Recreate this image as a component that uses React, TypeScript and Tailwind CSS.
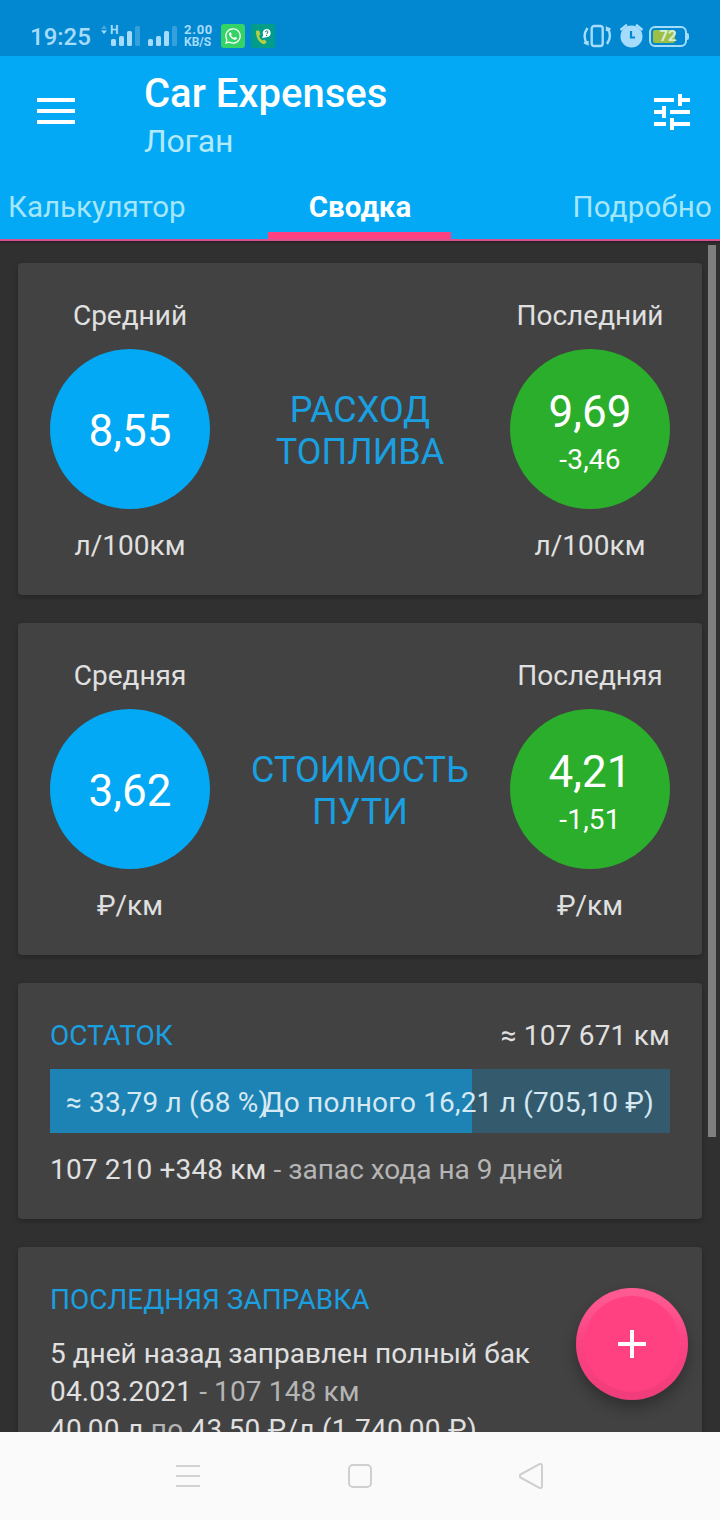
import { MdTune } from "react-icons/md";
import { FaWhatsapp } from "react-icons/fa";

type Reading = {
  label: string;
  value: string;
  diff?: string;
  unit: string;
};

function SignalBars({ className }: { className: string }) {
  return (
    <svg className={className} width="30" height="20" viewBox="0 0 30 20" fill="#a6dcfb">
      <rect x="0" y="13" width="5" height="7" rx="1.5" />
      <rect x="8" y="10" width="5" height="10" rx="1.5" />
      <rect x="16" y="5" width="5" height="15" rx="1.5" />
      <rect x="24" y="0" width="5" height="20" rx="1.5" opacity="0.3" />
    </svg>
  );
}

/* ================= STATUS BAR ================= */
function StatusBar() {
  return (
    <div className="flex h-14 items-start bg-[#0288d1] pr-[31px] pl-[30px] text-[#a6dcfb]">
      <span className="mt-[22px] w-[71px] text-2xl leading-[30px] font-medium">19:25</span>

      {/* first SIM with data arrows and network type */}
      <div className="relative mt-[26px] ml-[10px] w-[37px]">
        <SignalBars className="block" />
        <svg className="absolute -top-px -left-[10px]" width="6" height="10" viewBox="0 0 6 10">
          <path d="M0 4L3 0L6 4Z" fill="#a6dcfb" opacity="0.4" />
          <path d="M0 5.5L3 9L6 5.5Z" fill="#a6dcfb" />
        </svg>
        <span className="absolute -top-[2px] -left-[1px] text-[12px] leading-[12px] font-bold">H</span>
      </div>
      <SignalBars className="mt-[26px] block" />

      <div className="mt-[24px] ml-[6px] w-[31px] text-[13px] leading-[12px] font-bold">
        <div className="tracking-[0.7px]">2.00</div>
        <div className="text-[12px]">KB/S</div>
      </div>

      <div className="mt-6 ml-[6px] flex size-6 items-center justify-center rounded-[3px] bg-[#35d366]">
        <FaWhatsapp className="size-[18px] text-white" />
      </div>
      <svg className="mt-6 ml-[6px] block" width="24" height="24" viewBox="0 0 24 24">
        <rect width="24" height="24" rx="2" fill="#009e8a" />
        <path
          d="M5 7.5C5 6.5 8 6 8.5 7L9.3 10.5L8 12C8.8 14 10 15.5 11.5 16.5L13.2 15.6L15.6 17.5C15.5 19.5 13.5 20.5 11.5 19.7C7.5 18 5 13 5 7.5Z"
          fill="#b5cf45"
        />
        <path d="M15.5 5A4 4 0 1 1 15.5 13.2L11 14L12.2 11A4 4 0 0 1 15.5 5Z" fill="#fff" />
        <path d="M14.3 8.2C14.3 6.5 17 6.5 17 8C17 9.2 15.6 9 15.6 10.2M15.6 11V12" stroke="#00796b" fill="none" />
      </svg>

      <div className="ml-auto flex">
        {/* vibrate */}
        <svg className="mt-[24px] block" width="30" height="24" viewBox="0 0 30 24" fill="none" stroke="#a6dcfb" strokeWidth="2.4">
          <rect x="8.7" y="2" width="11" height="20" rx="2.5" />
          <path d="M4.5 4C1 9 1 15 4 19.5M1 18.5L4.5 20L4.5 17" />
          <path d="M24 20C27.5 15 27.5 9 24.5 4.5M27.5 5.500L24 4L24 7" />
        </svg>
        {/* alarm */}
        <svg className="mt-[23px] ml-[6px] block" width="26" height="25" viewBox="0 0 26 25">
          <circle cx="12.5" cy="13.5" r="11" fill="#a6dcfb" />
          <path d="M1.5 7L8 1.8M23.5 7L17 1.8" stroke="#a6dcfb" strokeWidth="2.4" />
          <path d="M12 8V14.5H16" stroke="#0288d1" strokeWidth="2.2" fill="none" />
        </svg>
        {/* battery */}
        <div className="mt-[25px] ml-[4px] flex items-center">
          <div className="relative h-[21px] w-[38px] rounded-[6px] border-2 border-[#a6dcfb] p-[2px]">
            <div className="h-full w-[22px] rounded-[2px] bg-[#9dbf45]" />
            <span className="absolute inset-0 text-center text-[15px] leading-[17px] font-bold text-[#d6f0d8]">72</span>
          </div>
          <div className="h-[7px] w-[2px] rounded-r bg-[#a6dcfb]" />
        </div>
      </div>
    </div>
  );
}

/* ================= HEADER ================= */
function Header() {
  return (
    <header className="border-b-2 border-[#d8508c] bg-[#03a9f4]">
      <div className="flex h-[112px] items-center pr-7 pl-[37px]">
        <svg className="-mt-[2px]" width="38" height="26" viewBox="0 0 38 26" fill="#fff">
          <rect width="38" height="4" />
          <rect y="11" width="38" height="4" />
          <rect y="22" width="38" height="4" />
        </svg>
        <div className="ml-[69px] pt-2">
          <h1 className="text-[40px] leading-[50px] font-medium text-white">Car Expenses</h1>
          <p className="text-[32px] leading-[44px] tracking-[-0.2px] text-[#b3e9fc]">Логан</p>
        </div>
        <MdTune className="ml-auto -mr-[4px] size-12 text-white" />
      </div>

      <nav className="flex h-16 items-center justify-between px-2 pt-[14px] text-[29.5px] text-[#a5e6fb]">
        <span className="w-[196px]">Калькулятор</span>
        <span className="font-bold text-white">Сводка</span>
        <span className="w-[196px] text-right tracking-[0.2px]">Подробно</span>
      </nav>
      <div className="ml-[268px] h-[7px] w-[183px] bg-[#ff4081]" />
    </header>
  );
}

function Card({ children }: { children: React.ReactNode }) {
  return (
    <section className="rounded-[4px] bg-[#424242] px-8 pt-[34px] pb-[30px] shadow-[0_2px_5px_rgba(0,0,0,0.25)]">
      {children}
    </section>
  );
}

function Gauge({ reading, color }: { reading: Reading; color: string }) {
  return (
    <div className="flex w-40 flex-col items-center">
      <span className="whitespace-nowrap">{reading.label}</span>
      <div className={`mt-[14px] mb-[18px] flex size-40 flex-col items-center justify-center rounded-full pt-1 text-white ${color}`}>
        <span className="text-[44px] leading-[52px]">{reading.value}</span>
        {reading.diff && <span className="mt-[3px] -mb-[3px] leading-[38px] tracking-[0.2px]">{reading.diff}</span>}
      </div>
      <span>{reading.unit}</span>
    </div>
  );
}

function SummaryCard({ title, average, last }: { title: string[]; average: Reading; last: Reading }) {
  return (
    <Card>
      <div className="flex items-center justify-between">
        <Gauge reading={average} color="bg-[#03a9f4]" />
        <h2 className="text-center text-[36px] leading-[42px] text-[#1a9fe0]">
          {title[0]}
          <br />
          {title[1]}
        </h2>
        <Gauge reading={last} color="bg-[#2bae2b]" />
      </div>
    </Card>
  );
}

/* ================= ANDROID NAVIGATION ================= */
function NavigationBar() {
  return (
    <div className="flex h-[88px] items-center justify-center gap-[146px] bg-[#fafafa]">
      <svg width="26" height="26" viewBox="0 0 26 26" stroke="#d2d2d2" strokeWidth="2">
        <path d="M1 3H25M1 13H25M1 23H25" />
      </svg>
      <svg width="26" height="26" viewBox="0 0 26 26" fill="none" stroke="#cfcfcf" strokeWidth="2">
        <rect x="2" y="2" width="22" height="22" rx="4" />
      </svg>
      <svg width="26" height="26" viewBox="0 0 26 26" fill="none" stroke="#cfcfcf" strokeWidth="2" strokeLinejoin="round">
        <path d="M1.5 11.5L20 1.3Q23 0 23 3V23Q23 26 20 24.7L1.5 14.5Q0 13 1.5 11.5Z" />
      </svg>
    </div>
  );
}

export default function App() {
  return (
    <div className="flex h-[1520px] w-[720px] flex-col overflow-hidden bg-[#303030] font-['Roboto',sans-serif]">
      <StatusBar />
      <Header />

      <main className="relative min-h-0 flex-1 overflow-hidden">
        <div className="flex flex-col gap-7 px-[18px] pt-[22px] text-[28px] leading-[38px] text-[#e0e0e0]">
          <SummaryCard
            title={["РАСХОД", "ТОПЛИВА"]}
            average={{ label: "Средний", value: "8,55", unit: "л/100км" }}
            last={{ label: "Последний", value: "9,69", diff: "-3,46", unit: "л/100км" }}
          />
          <SummaryCard
            title={["СТОИМОСТЬ", "ПУТИ"]}
            average={{ label: "Средняя", value: "3,62", unit: "₽/км" }}
            last={{ label: "Последняя", value: "4,21", diff: "-1,51", unit: "₽/км" }}
          />

          {/* Fuel left in the tank */}
          <Card>
            <div className="flex justify-between">
              <h2 className="text-[#1a9fe0]">ОСТАТОК</h2>
              <span className="tracking-[0.2px]">≈ 107 671 км</span>
            </div>
            <div className="mt-[14px] mb-[18px] flex h-16 items-center justify-between bg-linear-to-r from-[#1c83b4] from-68% to-[#335b6d] to-68% px-4 pt-1 tracking-[0.18px] whitespace-nowrap text-[#d6e8f2]">
              <span className="w-[190px]">≈ 33,79 л (68 %)</span>
              <span>До полного 16,21 л (705,10 ₽)</span>
            </div>
            <p>
              <span className="tracking-[0.15px]">107 210 +348 км </span>
              <span className="text-[#b5b5b5]">- запас хода на 9 дней</span>
            </p>
          </Card>

          {/* Last refuel */}
          <Card>
            <h2 className="mb-4 text-[#1a9fe0]">ПОСЛЕДНЯЯ ЗАПРАВКА</h2>
            <p>5 дней назад заправлен полный бак</p>
            <p className="tracking-[0.14px]">
              04.03.2021 <span className="text-[#b5b5b5]">- 107 148 км</span>
            </p>
            <p className="tracking-[0.27px]">
              40,00 л <span className="text-[#b5b5b5]">по</span> 43,50 ₽/л (1 740,00 ₽)
            </p>
          </Card>
        </div>

        {/* toolbar shadow and scrollbar */}
        <div className="absolute inset-x-0 top-0 h-[4px] bg-linear-to-b from-[#2a2027] to-[#303030]" />
        <div className="absolute top-[4px] right-1 h-[892px] w-2 bg-[#7e7e7e]" />

        <button className="absolute right-8 bottom-8 flex size-28 items-center justify-center rounded-full bg-linear-to-b from-[#ff5c94] via-[#fb4283] to-[#f03c7a] shadow-[0_8px_14px_rgba(0,0,0,0.28)]">
          <span className="flex size-24 items-center justify-center rounded-full bg-[#ff4081]">
            <svg width="28" height="28" viewBox="0 0 28 28" stroke="#fff" strokeWidth="4">
              <path d="M14 0V28M0 14H28" />
            </svg>
          </span>
        </button>
      </main>

      <NavigationBar />
    </div>
  );
}
